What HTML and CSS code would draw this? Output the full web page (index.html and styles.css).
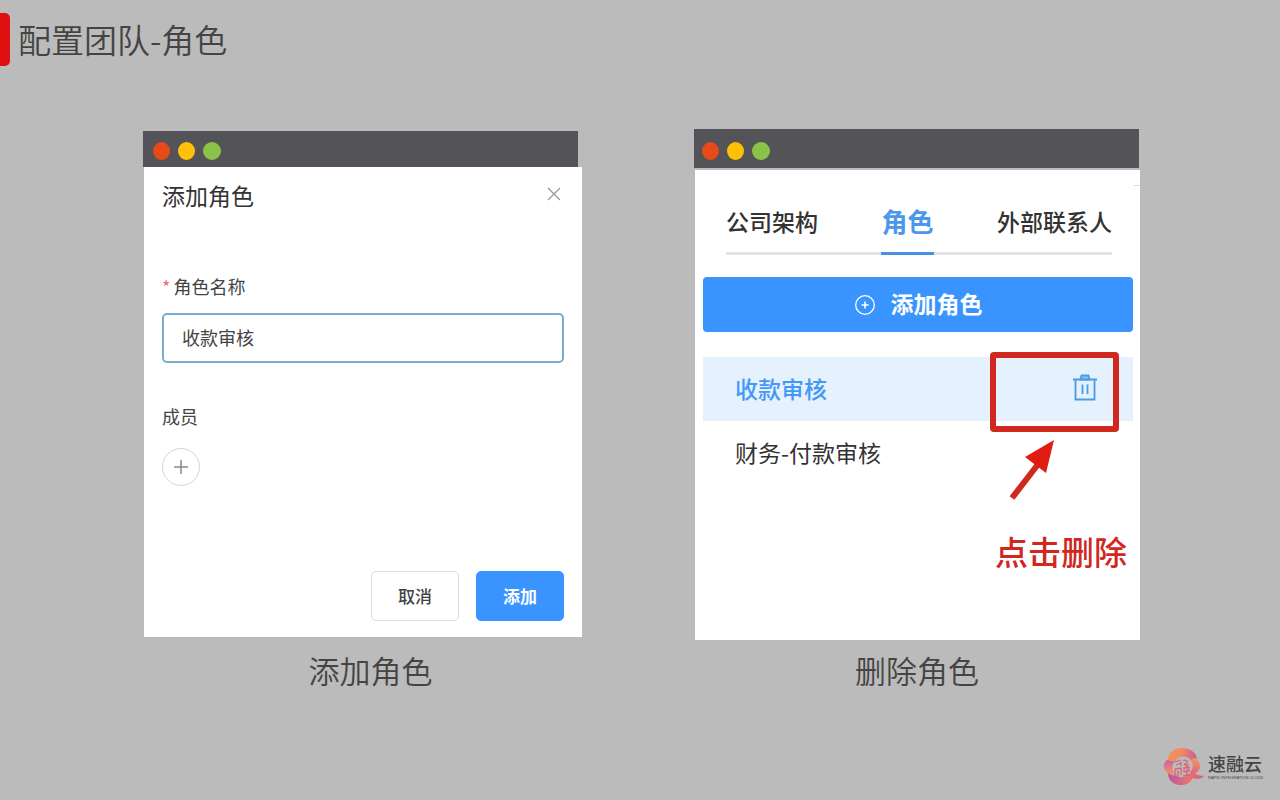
FILE: index.html
```html
<!DOCTYPE html>
<html lang="zh-CN">
<head>
    <meta charset="UTF-8">
    <title>配置团队-角色</title>
    <link rel="stylesheet" href="styles.css">
</head>
<body>
<header class="head">
    <h1>配置团队-角色</h1>
</header>
<main class="main">
    <figure class="shot shot-add">
        <div class="bar">
            <i class="dot red"></i>
            <i class="dot yellow"></i>
            <i class="dot green"></i>
        </div>
        <form class="win dialog">
            <div class="dialog-head">
                <h2>添加角色</h2>
                <button type="button" class="close" aria-label="关闭">
                    <svg width="14" height="14" viewBox="0 0 14 14"><path d="M1 1L13 13M13 1L1 13" stroke="#999" stroke-width="1.3" fill="none"/></svg>
                </button>
            </div>
            <label class="label" for="roleName"><span class="star">*</span>角色名称</label>
            <input class="input" id="roleName" type="text" value="收款审核">
            <div class="label">成员</div>
            <button type="button" class="plus" aria-label="添加成员">
                <svg width="16" height="16" viewBox="0 0 16 16"><path d="M8 1V15M1 8H15" stroke="#888" stroke-width="1.5" fill="none"/></svg>
            </button>
            <div class="btns">
                <button type="button" class="btn">取消</button>
                <button type="button" class="btn primary">添加</button>
            </div>
        </form>
        <figcaption>添加角色</figcaption>
    </figure>
    <figure class="shot shot-del">
        <div class="bar">
            <i class="dot red"></i>
            <i class="dot yellow"></i>
            <i class="dot green"></i>
        </div>
        <div class="win panel">
            <nav class="tabs">
                <a href="#">公司架构</a>
                <a href="#" class="active">角色</a>
                <a href="#">外部联系人</a>
            </nav>
            <button type="button" class="add">
                <svg width="22" height="22" viewBox="0 0 22 22" fill="none" stroke="#fff"><circle cx="11" cy="11" r="9.3" stroke-width="1.3"/><path d="M11 7.5V14.5M7.5 11H14.5" stroke-width="1.6"/></svg>
                <span>添加角色</span>
            </button>
            <ul class="list">
                <li class="active">
                    <span>收款审核</span>
                    <button type="button" class="del" aria-label="删除">
                        <svg width="26" height="28" viewBox="0 0 26 28" fill="none" stroke="#4a9be6" stroke-width="1.8"><path d="M1 5.5H25M3.5 5.5V25.5H22.5V5.5M10.5 10.5V20M15.5 10.5V20"/><path d="M8.5 5.5L9.5 1.5H16.5L17.5 5.5Z" fill="#8fc3f2"/></svg>
                    </button>
                    <!-- 标注 -->
                    <div class="mark"></div>
                    <svg class="arrow" width="46" height="62" viewBox="0 0 46 62"><path d="M3 59L30 24" stroke="#d0281f" stroke-width="6"/><path d="M45 1L16 18L37 34Z" fill="#e01b12"/></svg>
                    <strong class="tip">点击删除</strong>
                </li>
                <li>财务-付款审核</li>
            </ul>
        </div>
        <figcaption>删除角色</figcaption>
    </figure>
</main>
<footer class="foot">
    <svg width="42" height="40" viewBox="0 0 42 40" fill="none">
        <defs>
            <linearGradient id="top" x1="0" y1="0" x2="1" y2="0">
                <stop offset="0" stop-color="#f0935c"/>
                <stop offset="0.5" stop-color="#f08862"/>
                <stop offset="1" stop-color="#c9599a"/>
            </linearGradient>
            <linearGradient id="side" x1="0" y1="0" x2="0" y2="1">
                <stop offset="0" stop-color="#c9609c"/>
                <stop offset="1" stop-color="#f39a62"/>
            </linearGradient>
            <linearGradient id="right" x1="0" y1="0" x2="0" y2="1">
                <stop offset="0" stop-color="#f39a62"/>
                <stop offset="1" stop-color="#dd6480"/>
            </linearGradient>
            <linearGradient id="bottom" x1="0" y1="0" x2="1" y2="0">
                <stop offset="0" stop-color="#bb55a4"/>
                <stop offset="0.6" stop-color="#e77569"/>
                <stop offset="1" stop-color="#d05a8e"/>
            </linearGradient>
        </defs>
        <path fill="url(#bottom)" d="M6 24C5 33 12 39 20 38C26 38 29 34 31 31C35 33 39 32 42 29C38 29 35 28 32 26L29 24C26 31 19 32 14 28Z"/>
        <path fill="url(#side)" d="M8 12C3 13 1 17 2 21C3 25 7 28 14 29C9 24 9 18 14 13C12 12 10 12 8 12Z"/>
        <path fill="url(#right)" d="M29 11C34 11 38 14 38 19C38 23 35 26 31 27C28 27 28 25 29 24C32 20 31 15 27 12Z"/>
        <path fill="url(#top)" d="M6 13C6 5 13 1 20 1C28 1 34 5 35 12C33 11 31 11 29 13C25 9 18 8 14 13C11 15 8 14 6 13Z"/>
        <path stroke="#df6076" stroke-width="1.3" d="M13 15L19 13M14 18L19 16V19M13 29V22L19 21V28M15 24L17 26M16 26V29M21 14C24 12 27 14 24 16C21 18 22 19 27 17M22 21L27 20V24L22 25ZM25 18V29M21 29L28 28"/>
    </svg>
    <div class="brand">
        <b>速融云</b>
        <small>RAPID INTEGRATION CLOUD</small>
    </div>
</footer>
</body>
</html>
```
FILE: styles.css
```css
*{
    margin: 0;
    padding: 0;
    box-sizing: border-box;
}
body{
    display: flex;
    flex-direction: column;
    min-height: 100vh;
    background: #bbb;
    color: #333;
    font-family: "Noto Sans CJK SC", sans-serif;
}
button{
    font-family: inherit;
    background: none;
    border: 0;
    cursor: pointer;
}
svg{
    display: block;
}
a{
    color: inherit;
    text-decoration: none;
}
.head{
    padding-top: 13px;
}
.head h1{
    display: flex;
    height: 53px;
    line-height: 53px;
    font-size: 33px;
    font-weight: 350;
    color: #444;
}
.head h1::before{
    content: "";
    width: 10px;
    margin-right: 8px;
    background: #de1010;
    border-radius: 0 5px 5px 0;
}
.main{
    display: grid;
    grid-template-columns: 439fr 446fr;
    column-gap: 112px;
    padding: 63px 140px 0 143px;
}
.shot{
    display: flex;
    flex-direction: column;
}
.shot-add{
    padding-top: 2px;
}
.bar{
    display: flex;
    align-items: center;
    gap: 8px;
    height: 36px;
    margin-right: 4px;
    padding: 4px 0 0 10px;
    background: #545458;
}
.shot-del .bar{
    height: 39px;
    margin-right: 1px;
    padding-left: 8px;
}
.dot{
    width: 17px;
    height: 18px;
    border-radius: 50%;
}
.dot.red{
    background: #e64a19;
}
.dot.yellow{
    background: #ffc107;
}
.dot.green{
    width: 18px;
    background: #8bc34a;
}
.win{
    min-height: 470px;
    margin-left: 1px;
    background: #fff;
}
figcaption{
    margin-top: auto;
    padding-left: 16px;
    line-height: 44px;
    text-align: center;
    font-size: 31px;
    font-weight: 350;
    color: #444;
}
.shot-del figcaption{
    margin-top: 8px;
    padding-left: 0;
}

/*添加角色弹窗*/
.dialog{
    display: flex;
    flex-direction: column;
    padding: 12px 18px 16px;
}
.dialog-head{
    display: flex;
    justify-content: space-between;
    align-items: flex-start;
    margin-bottom: 62px;
}
.dialog-head h2{
    line-height: 32px;
    font-size: 23px;
    font-weight: 400;
}
.close{
    padding: 8px 3px;
}
.label{
    line-height: 26px;
    font-size: 18px;
    color: #444;
}
.star{
    margin-right: 3px;
    color: #f56c6c;
}
.input{
    width: 100%;
    height: 50px;
    margin: 14px 0 40px;
    padding: 0 18px 2px;
    border: 2px solid #77aecb;
    border-radius: 5px;
    outline: 0;
    font-family: inherit;
    font-size: 18px;
    color: #444;
}
.plus{
    display: flex;
    align-items: center;
    justify-content: center;
    width: 38px;
    height: 38px;
    margin-top: 19px;
    border: 1px solid #d5d5d5;
    border-radius: 50%;
}
.btns{
    display: flex;
    justify-content: flex-end;
    gap: 17px;
    margin-top: auto;
}
.btn{
    width: 88px;
    height: 50px;
    padding-bottom: 2px;
    border: 1px solid #ddd;
    border-radius: 5px;
    font-size: 17px;
    font-weight: 500;
    color: #444;
}
.btn.primary{
    border-color: #3994ff;
    background: #3994ff;
    color: #fff;
    font-weight: 700;
}

/*角色列表*/
.panel{
    margin-top: 2px;
    padding: 24px 7px 0 8px;
    /*右上角分隔线*/
    background: linear-gradient(#ddd, #ddd) right 15px / 6px 1px no-repeat #fff;
}
.tabs{
    display: flex;
    justify-content: space-between;
    height: 61px;
    margin: 0 21px 0 23px;
    border-bottom: 3px solid #e0e4e8;
    line-height: 54px;
    font-size: 23px;
    font-weight: 500;
}
.tabs .active{
    height: 61px;
    border-bottom: 3px solid #4a90e2;
    font-size: 26px;
    font-weight: 700;
    color: #4a98ec;
}
.add{
    display: flex;
    align-items: center;
    justify-content: center;
    gap: 15px;
    width: 100%;
    height: 55px;
    margin: 22px 0 25px;
    border-radius: 4px;
    background: #3994ff;
    color: #fff;
    font-size: 23px;
    font-weight: 700;
}
.add span{
    padding-bottom: 3px;
}
.list{
    list-style: none;
}
.list li{
    position: relative;
    display: flex;
    align-items: center;
    justify-content: space-between;
    height: 64px;
    padding: 0 35px 3px 32px;
    font-size: 23px;
}
.list .active{
    background: #e5f1fd;
    color: #4298f5;
    font-weight: 500;
}
.mark{
    position: absolute;
    top: -5px;
    right: 14px;
    width: 129px;
    height: 80px;
    border: 6px solid #d0281f;
    border-radius: 4px;
    pointer-events: none;
}
.arrow{
    position: absolute;
    top: 82px;
    right: 78px;
}
.tip{
    position: absolute;
    top: 170px;
    right: 6px;
    line-height: 48px;
    font-size: 33px;
    font-weight: 500;
    color: #d0281f;
}

.foot{
    display: flex;
    justify-content: flex-end;
    gap: 4px;
    margin-top: auto;
    padding: 0 18px 13px 0;
}
.brand{
    display: flex;
    flex-direction: column;
    width: 54px;
    padding-top: 3px;
    white-space: nowrap;
}
.brand b{
    line-height: 26px;
    font-size: 18px;
    font-weight: 500;
    color: #444;
}
.brand small{
    line-height: 4px;
    font-family: "Liberation Sans", sans-serif;
    font-size: 4px;
    color: #444;
}
```
